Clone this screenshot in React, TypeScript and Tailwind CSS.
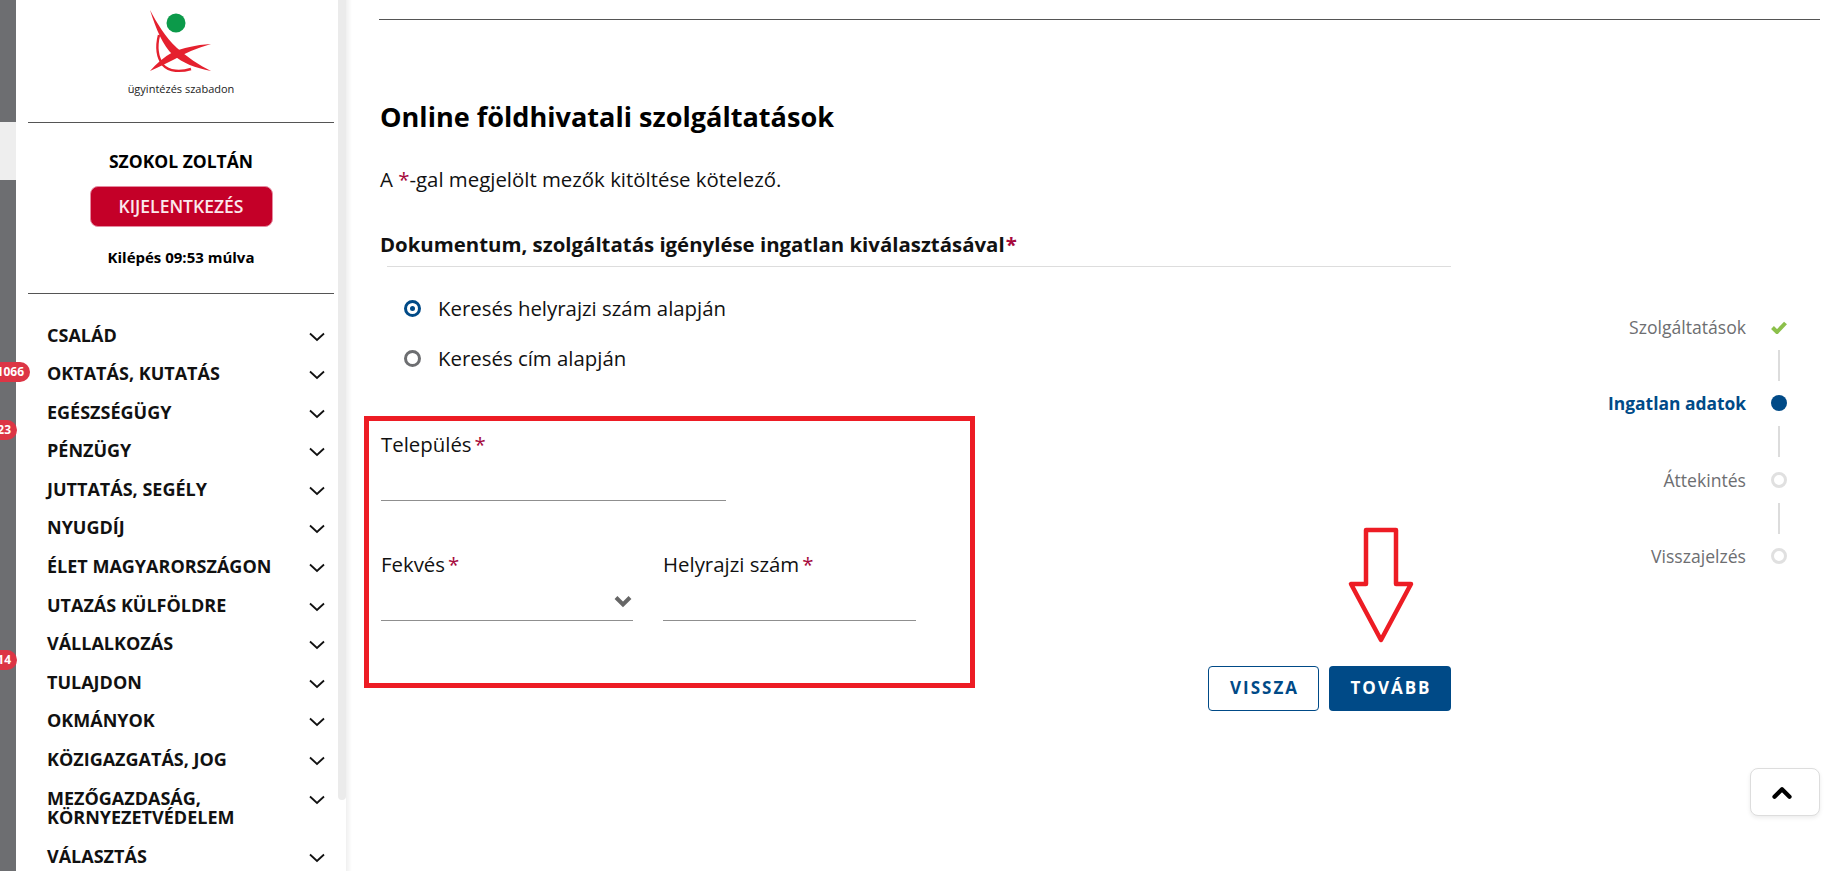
import { ChevronUp } from "lucide-react";

const menu = [
  "CSALÁD",
  "OKTATÁS, KUTATÁS",
  "EGÉSZSÉGÜGY",
  "PÉNZÜGY",
  "JUTTATÁS, SEGÉLY",
  "NYUGDÍJ",
  "ÉLET MAGYARORSZÁGON",
  "UTAZÁS KÜLFÖLDRE",
  "VÁLLALKOZÁS",
  "TULAJDON",
  "OKMÁNYOK",
  "KÖZIGAZGATÁS, JOG",
  "MEZŐGAZDASÁG, KÖRNYEZETVÉDELEM",
  "VÁLASZTÁS",
];

function Chevron() {
  return (
    <svg width="16" height="10" viewBox="0 0 16 10" className="shrink-0">
      <path d="M1 1.5 L8 8 L15 1.5" fill="none" stroke="#111" strokeWidth="1.8" />
    </svg>
  );
}

function Logo() {
  return (
    <svg width="72" height="72" viewBox="0 0 72 72">
      <circle cx="31" cy="18" r="9.5" fill="#0c9a4a" />
      {/* long blade */}
      <path d="M5 5 C12 18 20 32 32 43 C42 52 54 60 66 66 C50 63 38 58 28 50 C18 41 11 24 5 5 Z" fill="#e5202e" />
      {/* cross blade */}
      <path d="M66 39 C50 40 38 43 28 47 C19 52 11 59 5 66 C14 62 22 58 30 54 C40 48 52 43 66 39 Z" fill="#e5202e" />
      {/* thin arc */}
      <path d="M14 30 C11 42 12 52 18 60 C24 67 36 67 46 64" fill="none" stroke="#e5202e" strokeWidth="2.4" />
    </svg>
  );
}

function Req() {
  return <span className="ml-[3px] text-[#a6093d]">*</span>;
}

function Field({ label, width, select }: { label: string; width: string; select?: boolean }) {
  return (
    <div className={width}>
      <div className="text-[20.4px] leading-[24px] text-[#111]">
        {label}
        <Req />
      </div>
      <div className="mt-[20.5px] flex h-[24px] items-center justify-end border-b border-[#8f8f8f] box-content">
        {select && (
          <svg width="18" height="13" viewBox="0 0 18 13" className="mr-[1px] mb-[14px]">
            <path d="M2 2.5 L9 9.5 L16 2.5" fill="none" stroke="#666" strokeWidth="4" />
          </svg>
        )}
      </div>
    </div>
  );
}

function Radio({ label, checked }: { label: string; checked?: boolean }) {
  return (
    <div className="flex h-[50px] items-center gap-[17px] pl-[24px] text-[20.4px] text-[#111]">
      <span
        className={
          checked
            ? "flex h-[17px] w-[17px] items-center justify-center rounded-full border-[3px] border-[#004a87]"
            : "flex h-[17px] w-[17px] items-center justify-center rounded-full border-[3px] border-[#6d6e71]"
        }
      >
        {checked && <span className="h-[5px] w-[5px] rounded-full bg-[#004a87]" />}
      </span>
      {label}
    </div>
  );
}

function Step({ label, state }: { label: string; state: "done" | "active" | "todo" }) {
  return (
    <div className="flex h-[24px] items-center justify-end">
      <span
        className={
          state === "active"
            ? "text-[17.4px] font-bold text-[#004a87]"
            : "text-[17.6px] text-[#6d6e71]"
        }
      >
        {label}
      </span>
      <span className="ml-[25px] flex w-[16px] items-center justify-center">
        {state === "done" && (
          <svg width="16" height="13" viewBox="0 0 16 13">
            <path d="M1.5 6.5 L6 11 L14.5 2" fill="none" stroke="#8cc04b" strokeWidth="4" />
          </svg>
        )}
        {state === "active" && <span className="h-[16px] w-[16px] rounded-full bg-[#004a87]" />}
        {state === "todo" && <span className="h-[16px] w-[16px] rounded-full border-[3px] border-[#e0e0e0]" />}
      </span>
    </div>
  );
}

function Connector() {
  return <div className="mt-[11px] mr-[7px] mb-[10.4px] ml-auto h-[31px] w-[2px] bg-[#dcdcdc]" />;
}

export default function App() {
  return (
    <div
      className="relative flex h-[871px] overflow-hidden bg-white"
      style={{ fontFamily: '"Open Sans", "Noto Sans", sans-serif' }}
    >
      {/* LEFT STRIP */}
      <div className="flex w-4 shrink-0 flex-col">
        <div className="h-[122px] bg-[#6d6e71]" />
        <div className="h-[58px] bg-[#eeeeee]" />
        <div className="flex-1 bg-[#6d6e71]" />
      </div>

      {/* SIDEBAR */}
      <aside className="flex w-[322px] shrink-0 flex-col bg-white">
        <div className="mr-1 ml-3 flex h-[123px] shrink-0 flex-col items-center border-b border-[#555] pt-[5px]">
          <Logo />
          <div className="mt-[4px] text-[11px] leading-[16px] text-[#222]">ügyintézés szabadon</div>
        </div>

        <div className="mr-1 ml-3 flex h-[171px] shrink-0 flex-col items-center border-b border-[#555] pt-[26px]">
          <div className="text-[17.5px] leading-[24px] font-bold text-black">SZOKOL ZOLTÁN</div>
          <div className="mt-[13px] flex h-[41px] w-[183px] items-center justify-center rounded-[8px] border border-[#e58aa0] bg-[#c40028] text-[17.5px] font-semibold text-[#fbe9ed]">
            KIJELENTKEZÉS
          </div>
          <div className="mt-[20px] text-[15px] leading-[20px] font-bold text-black">Kilépés 09:53 múlva</div>
        </div>

        <nav className="shrink-0 pt-[22px] pr-[13px] pl-[31px]">
          {menu.map((item) => (
            <div key={item} className="flex items-start justify-between py-[9.5px]">
              <span className="max-w-[240px] text-[18px] leading-[19.6px] font-bold text-[#111]">{item}</span>
              <span className="mt-[6px]">
                <Chevron />
              </span>
            </div>
          ))}
        </nav>
      </aside>

      {/* SCROLLBAR */}
      <div className="w-2 shrink-0">
        <div className="h-[800px] rounded-b-[4px] bg-[#ebebeb]" />
      </div>
      <div className="w-[6px] shrink-0 bg-gradient-to-r from-[#f0f0f0] to-white" />

      {/* MAIN */}
      <main className="flex-1 pl-[28px] pr-[23px]">
        <div className="mt-[19px] -ml-[1px] border-t border-[#555]" />

        <div className="flex">
          <div className="w-[1071px] shrink-0">
            <h1 className="mt-[78px] text-[27.1px] leading-[38px] font-bold text-black">Online földhivatali szolgáltatások</h1>

            <p className="mt-[30px] text-[20.4px] leading-[26px] text-[#111]">
              A <span className="text-[#a6093d]">*</span>-gal megjelölt mezők kitöltése kötelező.
            </p>

            <div className="mt-[39px] text-[20.4px] leading-[26px] font-bold text-[#111]">
              Dokumentum, szolgáltatás igénylése ingatlan kiválasztásával
              <span className="ml-[1px] text-[#a6093d]">*</span>
            </div>
            <div className="mt-[9px] ml-[7px] border-t border-[#dddddd]" />

            <div className="mt-[16px]">
              <Radio label="Keresés helyrajzi szám alapján" checked />
              <Radio label="Keresés cím alapján" />
            </div>

            <div className="mt-[48.5px] ml-[1px]">
              <Field label="Település" width="w-[345px]" />
              <div className="mt-[50.5px] flex gap-[30px]">
                <Field label="Fekvés" width="w-[252px]" select />
                <Field label="Helyrajzi szám" width="w-[253px]" />
              </div>
            </div>

            <div className="mt-[44.5px] flex justify-end gap-[10px]">
              <div className="flex h-[45px] w-[111px] items-center justify-center rounded-[4px] border border-[#004a87] pl-[2px] text-[17px] font-bold tracking-[2px] text-[#004a87]">
                VISSZA
              </div>
              <div className="flex h-[45px] w-[122px] items-center justify-center rounded-[4px] bg-[#004a87] pl-[2px] text-[17px] font-bold tracking-[2px] text-white">
                TOVÁBB
              </div>
            </div>
          </div>

          {/* STEPPER */}
          <div className="mt-[295px] flex-1 pr-[33px]">
            <Step label="Szolgáltatások" state="done" />
            <Connector />
            <Step label="Ingatlan adatok" state="active" />
            <Connector />
            <Step label="Áttekintés" state="todo" />
            <Connector />
            <Step label="Visszajelzés" state="todo" />
          </div>
        </div>
      </main>

      {/* BADGES */}
      <div className="absolute top-[362px] right-[calc(100%-30px)] flex h-[20px] items-center rounded-full bg-[#dc3545] pr-[6px] pl-[7px] text-[12px] font-bold text-white">
        1066
      </div>
      <div className="absolute top-[420px] right-[calc(100%-17px)] flex h-[20px] items-center rounded-full bg-[#dc3545] pr-[6px] pl-[7px] text-[12px] font-bold text-white">
        23
      </div>
      <div className="absolute top-[650px] right-[calc(100%-17px)] flex h-[20px] items-center rounded-full bg-[#dc3545] pr-[6px] pl-[7px] text-[12px] font-bold text-white">
        14
      </div>

      {/* RED ANNOTATIONS */}
      <div className="absolute top-[416px] left-[364px] h-[272px] w-[611px] border-[5px] border-[#ed1c24]" />
      <svg className="absolute top-[526px] left-[1347px]" width="68" height="118" viewBox="0 0 68 118">
        <path
          d="M19 4 H49 V58 H64 L34 114 L4 58 H19 Z"
          fill="none"
          stroke="#ed1c24"
          strokeWidth="4.5"
          strokeLinejoin="round"
        />
      </svg>

      {/* SCROLL TOP */}
      <div className="absolute top-[768px] left-[1750px] flex h-[48px] w-[70px] items-center justify-center rounded-[8px] border border-[#dddddd] bg-white pt-[2px] pr-[6px] shadow-[0_2px_4px_rgba(0,0,0,0.08)]">
        <ChevronUp size={30} strokeWidth={3.4} color="#000" />
      </div>
    </div>
  );
}
